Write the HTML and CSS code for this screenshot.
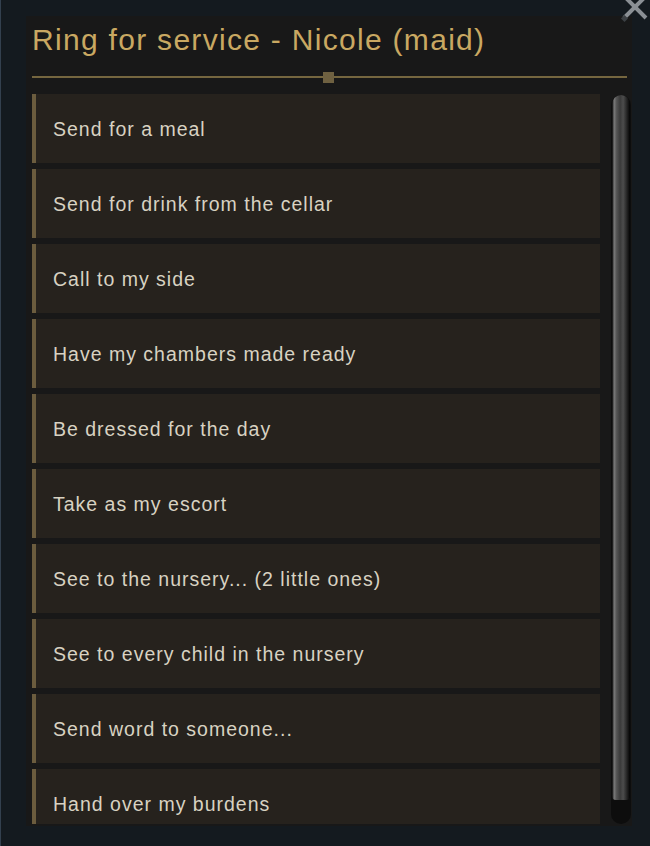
FILE: index.html
```html
<!DOCTYPE html>
<html lang="en">
<head>
    <meta charset="UTF-8">
    <meta name="viewport" content="width=device-width, initial-scale=1.0">
    <title>Ring for service</title>
    <link rel="stylesheet" href="styles.css">
</head>
<body>

    <div class="screen">
        <div class="panel">
            <header class="panel-header">
                <h1>Ring for service - Nicole (maid)</h1>
                <div class="divider"><span class="divider-knob"></span></div>
            </header>

            <div class="panel-body">
                <ul class="options">
                    <li class="option">Send for a meal</li>
                    <li class="option">Send for drink from the cellar</li>
                    <li class="option">Call to my side</li>
                    <li class="option">Have my chambers made ready</li>
                    <li class="option">Be dressed for the day</li>
                    <li class="option">Take as my escort</li>
                    <li class="option">See to the nursery... (2 little ones)</li>
                    <li class="option">See to every child in the nursery</li>
                    <li class="option">Send word to someone...</li>
                    <li class="option">Hand over my burdens</li>
                </ul>
                <div class="scrollbar">
                    <div class="scroll-thumb"></div>
                </div>
            </div>
        </div>

        <button class="close" aria-label="Close">
            <svg width="30" height="30" viewBox="0 0 30 30">
                <path d="M4 -4 L26 18 M26 -4 L4 18" stroke="#8b9095" stroke-width="4" fill="none"/>
                <rect x="2" y="16" width="5" height="5" fill="#3c4044" transform="rotate(45 4.5 18.5)"/>
            </svg>
        </button>
    </div>

</body>
</html>
```

FILE: styles.css
```css
body {
    margin: 0;
    padding: 0;
    background: #141a1f;
    font-family: "Liberation Sans", Arial, sans-serif;
}

.screen {
    position: relative;
    width: 650px;
    height: 846px;
    overflow: hidden;
    border-left: 1px solid #33404e;
    box-sizing: border-box;
    padding: 16px 0 0 25px;
}

.panel {
    width: 606px;
    height: 810px;
    background: #181818;
    padding: 0 1px 0 6px;
    box-sizing: border-box;
}

.panel-header h1 {
    margin: 0;
    padding-top: 5px;
    height: 55px;
    font-size: 30px;
    font-weight: normal;
    letter-spacing: 1.3px;
    color: #c9a862;
    line-height: 38px;
    white-space: nowrap;
}

.divider {
    position: relative;
    width: 595px;
    height: 2px;
    background: #75663f;
}

.divider-knob {
    position: absolute;
    left: 291px;
    top: -4px;
    width: 11px;
    height: 11px;
    background: #6f6141;
}

.panel-body {
    display: flex;
    gap: 11px;
    margin-top: 16px;
    height: 732px;
}

.options {
    list-style: none;
    margin: 0;
    padding: 0;
    width: 568px;
    flex: none;
    height: 730px;
    overflow: hidden;
    display: flex;
    flex-direction: column;
    gap: 6px;
}

.option {
    flex: none;
    height: 69px;
    box-sizing: border-box;
    padding: 2px 0 0 17px;
    display: flex;
    align-items: center;
    background: #26221d;
    border-left: 4px solid #6b5c3e;
    color: #d8d2c2;
    font-size: 19.5px;
    letter-spacing: 1px;
}

.scrollbar {
    flex: none;
    width: 20px;
    height: 729px;
    margin-top: 1px;
    background: #0d0d0d;
    border-radius: 10px;
    position: relative;
}

.scroll-thumb {
    position: absolute;
    left: 1px;
    right: 1px;
    top: 0;
    bottom: 24px;
    border-radius: 9px 9px 4px 4px;
    background: linear-gradient(to right, #030303 0%, #7a7a7a 12%, #565656 25%, #3a3a3a 45%, #4c4c4c 62%, #262626 82%, #030303 100%);
}

.close {
    position: absolute;
    top: 0;
    right: 0;
    width: 30px;
    height: 30px;
    padding: 0;
    border: none;
    background: none;
    cursor: pointer;
}
```
